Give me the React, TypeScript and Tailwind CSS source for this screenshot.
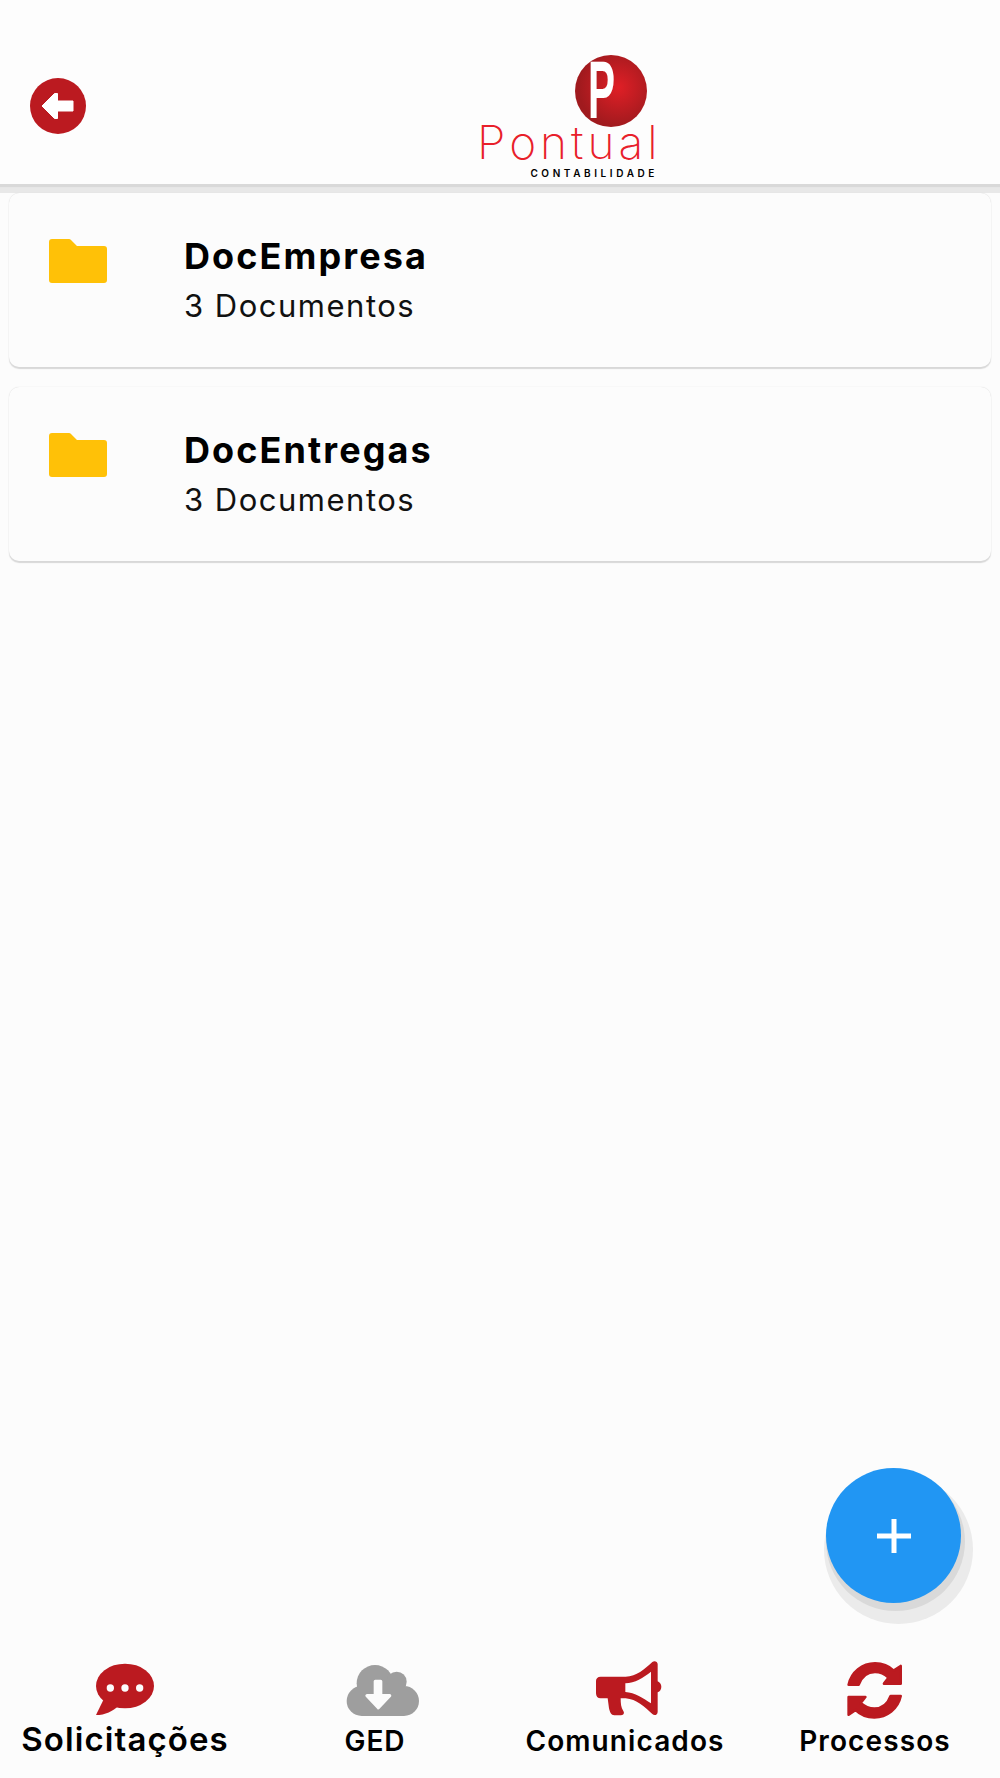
import React from "react";

const documents = [
  { name: "DocEmpresa", count: "3 Documentos" },
  { name: "DocEntregas", count: "3 Documentos" },
];

function BackIcon() {
  return (
    <svg width="56" height="56" viewBox="0 0 56 56" className="absolute left-[30px] top-[78px]">
      <circle cx="28" cy="28" r="28" fill="#bb1a20" />
      <path
        d="M12 28 24.5 15.5 27.5 15.5V23H43V33H27.5V40.500L24.500 40.500Z"
        fill="#fff"
        stroke="#fff"
        strokeWidth="1"
        strokeLinejoin="round"
      />
    </svg>
  );
}

function Logo() {
  return (
    <div className="relative w-[180px] h-[124px] mt-[55px] font-['Inter',sans-serif]">
      <svg className="absolute right-[12px] top-0" width="72" height="72" viewBox="0 0 72 72">
        <defs>
          <radialGradient id="ball" cx="0.6" cy="0.45" r="0.55">
            <stop offset="0" stopColor="#e01f26" />
            <stop offset="1" stopColor="#a01a1e" />
          </radialGradient>
        </defs>
        <circle cx="36" cy="36" r="36" fill="url(#ball)" />
      </svg>
      <span className="absolute left-[109px] top-[7px] w-[54px] text-[81px] leading-[56px] font-bold text-white font-['Liberation_Sans',sans-serif] scale-x-50 origin-left">
        P
      </span>
      <span className="absolute -left-[2px] top-[64px] text-[46px] leading-[46px] font-extralight text-[#e8202a] tracking-[4px]">
        Pontual
      </span>
      <span className="absolute right-[1px] top-[113px] text-[10px] leading-[10px] font-semibold text-black tracking-[3.6px]">
        CONTABILIDADE
      </span>
    </div>
  );
}

function FolderIcon() {
  return (
    <svg width="58" height="44" viewBox="0 0 58 44" className="shrink-0">
      <path
        d="M3 0H20a3 3 0 0 1 2 1l6 6H55a3 3 0 0 1 3 3V41a3 3 0 0 1-3 3H3a3 3 0 0 1-3-3V3a3 3 0 0 1 3-3z"
        fill="#ffc107"
      />
    </svg>
  );
}

function DocumentCard({ name, count }: { name: string; count: string }) {
  return (
    <div className="h-[174px] rounded-[10px] bg-[#fcfcfc] flex items-start pl-[40px] shadow-[0_2px_1px_#d8d8d8,0_0_1px_#cfcfcf]">
      <div className="pt-[46px]">
        <FolderIcon />
      </div>
      <div className="ml-[77px] pt-[41px]">
        <p className="text-[36px] leading-[44px] font-bold text-black tracking-[2.1px]">{name}</p>
        <p className="text-[31px] leading-[40px] mt-[8px] text-[#111] tracking-[1.5px]">{count}</p>
      </div>
    </div>
  );
}

function ChatIcon() {
  return (
    <svg width="80" height="70" viewBox="0 0 240 210">
      <ellipse cx="120" cy="93" rx="87" ry="67" fill="#bb1a20" />
      <path d="M55 135 33 180C60 180 85 168 100 152Z" fill="#bb1a20" />
      <circle cx="76" cy="99" r="11" fill="#fcfcfc" />
      <circle cx="120" cy="99" r="11" fill="#fcfcfc" />
      <circle cx="164" cy="99" r="11" fill="#fcfcfc" />
    </svg>
  );
}

function CloudIcon() {
  return (
    <svg width="80" height="70" viewBox="0 0 240 210" className="ml-[10px]">
      <g fill="#9e9e9e">
        <circle cx="105" cy="85" r="55" />
        <circle cx="170" cy="80" r="30" />
        <circle cx="65" cy="138" r="45" />
        <circle cx="192" cy="138" r="45" />
        <rect x="65" y="90" width="127" height="93" />
      </g>
      <path
        d="M106 79H122V122H149L115 158 81 122H106Z"
        fill="#fcfcfc"
        stroke="#fcfcfc"
        strokeWidth="10"
        strokeLinejoin="round"
      />
    </svg>
  );
}

function BullhornIcon() {
  return (
    <svg width="80" height="70" viewBox="0 0 240 210">
      <path
        fillRule="evenodd"
        fill="#bb1a20"
        d="M47 65H122C155 65 178 42 202 21 208 17 218 19 218 28V79C225 82 229 88 229 95 229 103 225 109 218 112V170C218 180 208 183 202 177 178 155 155 133 122 130H107C107 145 108 158 115 168 120 176 114 181 105 181H88C78 181 75 172 72 160L68 130H47C38 130 33 124 33 115V78C33 70 38 65 47 65ZM121 85V111C150 113 175 130 198 145V50C175 68 150 84 121 85Z"
      />
    </svg>
  );
}

function SyncIcon() {
  return (
    <svg width="80" height="70" viewBox="0 0 240 210">
      <g fill="#bb1a20" stroke="#bb1a20" strokeWidth="8" strokeLinejoin="round">
        <path d="M41 89C49 51 82 25 120 25 143 25 162 33 176 47L197 33V86H147L161 68C149 57 135 51 120 51 97 51 79 67 71 89Z" />
        <path
          transform="rotate(180 119 106)"
          d="M41 89C49 51 82 25 120 25 143 25 162 33 176 47L197 33V86H147L161 68C149 57 135 51 120 51 97 51 79 67 71 89Z"
        />
      </g>
    </svg>
  );
}

export default function App() {
  return (
    <div className="relative h-[1778px] w-full flex flex-col overflow-hidden bg-[#fcfcfc] font-['Inter',sans-serif]">
      <header className="h-[184px] shrink-0 relative bg-[#fdfdfd] shadow-[0_3px_1px_#d9d9d9]">
        <BackIcon />
        <div className="w-full flex justify-center pl-[138px]">
          <Logo />
        </div>
      </header>

      <div className="h-[9px] shrink-0 bg-[#e8e8e8]" />

      <main className="flex-1 flex flex-col gap-[20px] px-[9px]">
        {documents.map((doc) => (
          <DocumentCard key={doc.name} name={doc.name} count={doc.count} />
        ))}
      </main>

      <button className="absolute left-[826px] top-[1468px] w-[135px] h-[135px] rounded-full bg-[#2196f3] flex items-center justify-center shadow-[2px_6px_0_2px_#d9d9d9,5px_14px_0_7px_#ebebeb]">
        <svg width="34" height="34" viewBox="0 0 34 34">
          <path d="M14.500 0h5v14.500h14.500v5H19.500V34h-5V19.500H0v-5h14.500z" fill="#fff" />
        </svg>
      </button>

      <nav className="h-[123px] shrink-0 grid grid-cols-4">
        <div className="flex flex-col items-center">
          <ChatIcon />
          <span className="text-[33px] leading-[38px] font-semibold text-black tracking-[1.1px] -mt-[5px]">Solicitações</span>
        </div>
        <div className="flex flex-col items-center">
          <CloudIcon />
          <span className="text-[28px] leading-[36px] font-semibold text-black tracking-[1px] -mt-[2px]">GED</span>
        </div>
        <div className="flex flex-col items-center">
          <BullhornIcon />
          <span className="text-[28px] leading-[36px] font-semibold text-black tracking-[1.1px] -mt-[2px]">Comunicados</span>
        </div>
        <div className="flex flex-col items-center">
          <SyncIcon />
          <span className="text-[28px] leading-[36px] font-semibold text-black tracking-[1.1px] -mt-[2px]">Processos</span>
        </div>
      </nav>
    </div>
  );
}
